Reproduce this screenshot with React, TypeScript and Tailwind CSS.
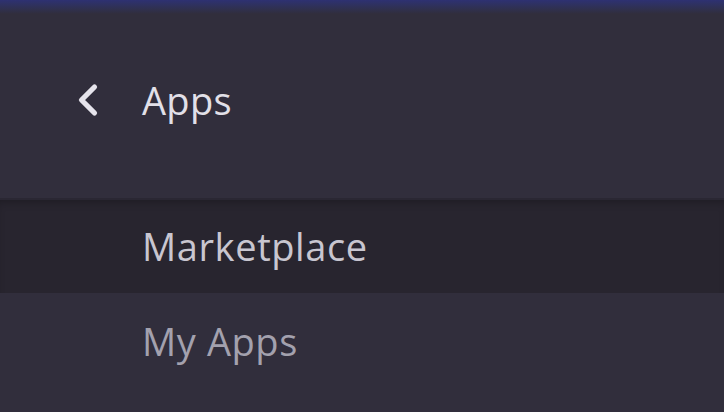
import { ChevronLeft } from "lucide-react";

function App() {
  return (
    <div
      className="relative h-[412px] w-[724px] overflow-hidden bg-[#312e3c] text-[#e2e0e8]"
      style={{ fontFamily: '"Open Sans", "Noto Sans", sans-serif' }}
    >
      <div className="h-[14px] bg-gradient-to-b from-[#2e3172] to-[#312e3c]" />
      <div className="flex h-[172px] items-center pl-[62px]">
        <ChevronLeft className="h-[52px] w-[52px] text-[#e6e4ec]" strokeWidth={2.4} />
        <span className="ml-[28px] text-[38px] font-medium tracking-[0.3px]">Apps</span>
      </div>
      <div className="h-[12px]" />
      <div className="flex flex-col">
        <div className="flex h-[95px] items-center border-t-2 border-[#2a2733] bg-[#28252f] pl-[142px] shadow-[inset_0_6px_8px_-4px_rgba(0,0,0,0.25)]">
          <span className="text-[38px] tracking-[0.6px] text-[#c8c6d0]">Marketplace</span>
        </div>
        <div className="flex h-[97px] items-center pl-[142px]">
          <span className="text-[38px] tracking-[0.6px] text-[#a3a1ae]">My Apps</span>
        </div>
      </div>
    </div>
  );
}

export default App;
